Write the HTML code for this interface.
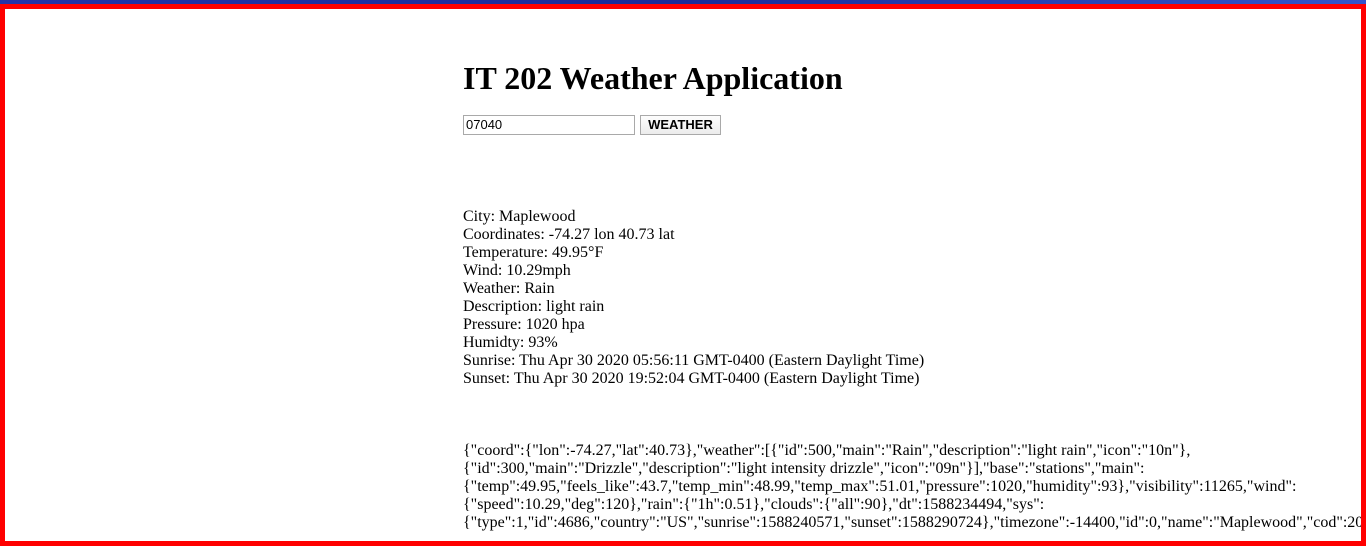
<!DOCTYPE html>
<html><head><meta charset="utf-8"><style>
html,body{margin:0;padding:0;background:#fff;width:1366px;height:551px;overflow:hidden}
.top{position:absolute;left:0;top:0;width:1366px;height:4px;background:linear-gradient(90deg,#2233aa,#1a2a9a 50%,#3355cc)}
.frame{position:absolute;left:0;top:4px;width:1356px;height:532px;border:5px solid #f00;overflow:hidden;background:#fff}
.c{position:absolute;left:458px;top:0;font-family:"Liberation Serif",serif;font-size:16px;color:#000;white-space:nowrap}
h1{position:absolute;top:51px;left:0;margin:0;font-size:32px;font-weight:bold;white-space:nowrap}
.inp{position:absolute;top:106px;left:0;width:168px;height:18px;border:1px solid #a9a9a9;font-family:"Liberation Sans",sans-serif;font-size:13px;line-height:18px;padding-left:2px;box-sizing:content-box}
.btn{position:absolute;top:106px;left:177px;width:79px;height:18px;border:1px solid #a9a9a9;background:linear-gradient(#fdfdfd,#ececec);font-family:"Liberation Sans",sans-serif;font-size:13px;font-weight:bold;line-height:18px;text-align:center}
.info{position:absolute;top:199px;left:0;line-height:18px}
.json{position:absolute;top:433px;left:0;line-height:18px}
</style></head><body>
<div class="top"></div>
<div class="frame"><div class="c">
<h1>IT 202 Weather Application</h1>
<div class="inp">07040</div>
<div class="btn">WEATHER</div>
<div class="info">City: Maplewood<br>Coordinates: -74.27 lon 40.73 lat<br>Temperature: 49.95°F<br>Wind: 10.29mph<br>Weather: Rain<br>Description: light rain<br>Pressure: 1020 hpa<br>Humidty: 93%<br>Sunrise: Thu Apr 30 2020 05:56:11 GMT-0400 (Eastern Daylight Time)<br>Sunset: Thu Apr 30 2020 19:52:04 GMT-0400 (Eastern Daylight Time)</div>
<div class="json">{"coord":{"lon":-74.27,"lat":40.73},"weather":[{"id":500,"main":"Rain","description":"light rain","icon":"10n"},<br>{"id":300,"main":"Drizzle","description":"light intensity drizzle","icon":"09n"}],"base":"stations","main":<br>{"temp":49.95,"feels_like":43.7,"temp_min":48.99,"temp_max":51.01,"pressure":1020,"humidity":93},"visibility":11265,"wind":<br>{"speed":10.29,"deg":120},"rain":{"1h":0.51},"clouds":{"all":90},"dt":1588234494,"sys":<br>{"type":1,"id":4686,"country":"US","sunrise":1588240571,"sunset":1588290724},"timezone":-14400,"id":0,"name":"Maplewood","cod":200}</div>
</div></div>
</body></html>
